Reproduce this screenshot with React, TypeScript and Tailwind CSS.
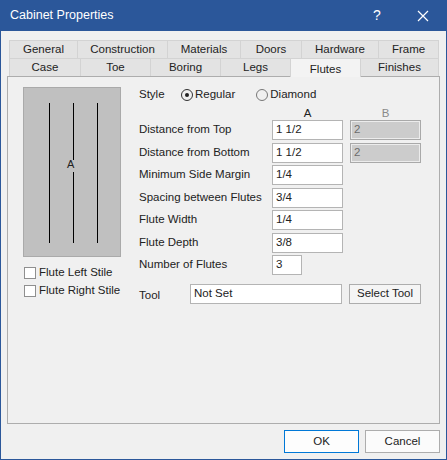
const row1 = [
  { label: "General", w: 68 },
  { label: "Construction", w: 90 },
  { label: "Materials", w: 73 },
  { label: "Doors", w: 61 },
  { label: "Hardware", w: 77 },
  { label: "Frame", w: 60 },
];

const row2 = [
  { label: "Case", w: 71 },
  { label: "Toe", w: 70 },
  { label: "Boring", w: 70 },
  { label: "Legs", w: 70 },
  { label: "Flutes", w: 70, active: true },
  { label: "Finishes", w: 78 },
];

const fields = [
  { label: "Distance from Top", a: "1 1/2", b: "2" },
  { label: "Distance from Bottom", a: "1 1/2", b: "2" },
  { label: "Minimum Side Margin", a: "1/4" },
  { label: "Spacing between Flutes", a: "3/4" },
  { label: "Flute Width", a: "1/4" },
  { label: "Flute Depth", a: "3/8" },
  { label: "Number of Flutes", a: "3", narrow: true },
];

function Tab({ label, w, active }: { label: string; w: number; active?: boolean }) {
  return (
    <div
      style={{ width: w + 1 }}
      className={
        "-mr-px flex h-[18px] items-center justify-center border border-b-0 border-[#d3d3d3] " +
        (active ? "relative z-10 h-[19px] -mb-px bg-[#f3f3f3] pt-[3px]" : "bg-[#e3e3e3]")
      }
    >
      {label}
    </div>
  );
}

function Field({ value, className }: { value: string; className: string }) {
  return (
    <div className={"flex h-[20px] items-center border border-[#b4b4b4] bg-white pl-[3px] " + className}>
      {value}
    </div>
  );
}

function Flutes() {
  return (
    <div className="relative h-[170px] w-[98px] border border-[#aaaaaa] bg-[#c0c0c0]">
      <svg width="96" height="168" className="absolute left-0 top-0">
        <line x1="25.5" y1="15" x2="25.5" y2="155" stroke="#000" />
        <line x1="49.5" y1="15" x2="49.5" y2="72" stroke="#000" />
        <line x1="49.5" y1="84" x2="49.5" y2="155" stroke="#000" />
        <line x1="73.5" y1="15" x2="73.5" y2="155" stroke="#000" />
      </svg>
      <span className="absolute left-[43px] top-[70px] text-[11px] leading-[12px]">A</span>
    </div>
  );
}

function Check({ label }: { label: string }) {
  return (
    <div className="flex h-[13px] items-center gap-[3px]">
      <div className="h-[12px] w-[12px] border border-[#8f8f8f] bg-white" />
      <span>{label}</span>
    </div>
  );
}

export default function App() {
  return (
    <div
      className="flex h-[460px] w-[447px] flex-col bg-[#f0f0f0] text-[11.5px] text-[#222]"
      style={{ fontFamily: '"Liberation Sans", Arial, sans-serif' }}
    >
      <div className="flex h-[31px] shrink-0 items-center bg-[#2b579a] pl-[10px] text-[12.5px] text-white">
        <span className="flex-1">Cabinet Properties</span>
        <span className="w-[14px] text-[14px] font-light">?</span>
        <svg width="12" height="12" className="ml-[30px] mr-[18px]" viewBox="0 0 12 12">
          <path d="M1 1 L11 11 M11 1 L1 11" stroke="#fff" strokeWidth="1.2" />
        </svg>
      </div>

      <div className="flex flex-1 flex-col border-x border-b border-[#2b579a] pl-[6px] pr-[6px]">
        <div className="ml-[2px] mt-[9px] flex">
          {row1.map((t) => (
            <Tab key={t.label} {...t} />
          ))}
        </div>
        <div className="ml-[2px] flex">
          {row2.map((t) => (
            <Tab key={t.label} {...t} />
          ))}
        </div>

        <div className="flex h-[348px] w-[433px] border border-[#adadad] pl-[15px] pt-[10px]">
          <div className="flex w-[116px] flex-col">
            <Flutes />
            <div className="ml-px mt-[9px] flex flex-col gap-[5px]">
              <Check label="Flute Left Stile" />
              <Check label="Flute Right Stile" />
            </div>
          </div>

          <div className="flex flex-col">
            <div className="flex h-[16px] items-center">
              <span className="w-[42px]">Style</span>
              <div className="flex items-center gap-[2px]">
                <div className="flex h-[12px] w-[12px] items-center justify-center rounded-full border border-[#333]">
                  <div className="h-[4px] w-[4px] rounded-full bg-[#222]" />
                </div>
                <span>Regular</span>
              </div>
              <div className="ml-[21px] flex items-center gap-[2px]">
                <div className="h-[12px] w-[12px] rounded-full border border-[#777]" />
                <span>Diamond</span>
              </div>
            </div>
            <div className="flex h-[17px] items-end">
              <span className="ml-[133px] w-[71px] text-center leading-[13px]">A</span>
              <span className="ml-[7px] w-[71px] text-center leading-[13px] text-[#8a8a8a]">B</span>
            </div>
            <div className="flex flex-col gap-[2.5px]">
              {fields.map((f) => (
                <div key={f.label} className="flex h-[20px] items-center">
                  <span className="w-[133px]">{f.label}</span>
                  <Field value={f.a} className={f.narrow ? "w-[30px]" : "w-[71px]"} />
                  {f.b && (
                    <div className="ml-[7px] flex h-[20px] w-[71px] items-center border border-[#a9a9a9] bg-[#cccccc] pl-[3px] text-[#6d6d6d] shadow-[inset_0_0_0_1px_#ececec]">
                      {f.b}
                    </div>
                  )}
                </div>
              ))}
            </div>
            <div className="mt-[9px] flex h-[20px] items-center">
              <span className="mt-[4px] w-[51px]">Tool</span>
              <Field value="Not Set" className="w-[152px]" />
              <div className="ml-[7px] flex h-[20px] w-[72px] items-center justify-center border border-[#adadad] bg-[#f5f5f5]">
                Select Tool
              </div>
            </div>
          </div>
        </div>

        <div className="mt-[6px] flex justify-end gap-[6px]">
          <div className="flex h-[23px] w-[75px] items-center justify-center border border-[#0078d7] bg-[#fdfdfd]">
            OK
          </div>
          <div className="flex h-[23px] w-[75px] items-center justify-center border border-[#adadad] bg-[#fbfbfb]">
            Cancel
          </div>
        </div>
      </div>
    </div>
  );
}
